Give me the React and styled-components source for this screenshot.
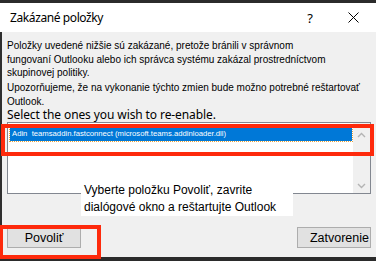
import React from "react";
import styled, { createGlobalStyle } from "styled-components";

const GlobalStyle = createGlobalStyle`
  html, body {
    margin: 0;
    padding: 0;
    background: #f0f0f0;
  }
`;

const Frame = styled.div`
  position: relative;
  width: 376px;
  height: 261px;
  box-sizing: border-box;
  border-top: 3px solid #2b2b2b;
  display: flex;
  flex-direction: column;
  overflow: hidden;
  font-family: "Liberation Sans", Arial, sans-serif;
  color: #000;
`;

const TitleBar = styled.div`
  height: 29px;
  flex-shrink: 0;
  background: #fff;
  display: flex;
  align-items: center;
  padding-left: 10px;
`;

const Title = styled.div`
  flex: 1;
  font-family: "Noto Sans", sans-serif;
  font-size: 12px;
  letter-spacing: -0.4px;
`;

const TitleButton = styled.div`
  width: ${(p) => p.$w}px;
  text-align: center;
  font-family: "Noto Sans", sans-serif;
  font-size: 13px;
  display: flex;
  justify-content: center;
  align-items: center;
`;

const Body = styled.div`
  flex: 1;
  display: flex;
  flex-direction: column;
  background: #f0f0f0;
  border-left: 2px solid #2f2f2f;
  padding: 7px 5px 0 5px;
`;

const Para = styled.p`
  margin: ${(p) => p.$mt || 0}px 0 0 0;
  font-size: 10px;
  line-height: 13.5px;
`;

const Prompt = styled.div`
  font-family: "Noto Sans", sans-serif;
  font-size: 12px;
  line-height: 14px;
  letter-spacing: -0.1px;
`;

const ListBox = styled.div`
  height: 72px;
  box-sizing: border-box;
  border: 1px solid #828790;
  background: #fff;
  display: flex;
`;

const Items = styled.div`
  flex: 1;
  padding: 4px 1px 0 2px;
`;

const Item = styled.div`
  height: 14px;
  box-sizing: border-box;
  background: ${(p) => (p.$selected ? "#0078d7" : "transparent")};
  color: ${(p) => (p.$selected ? "#fff" : "#000")};
  outline: ${(p) => (p.$selected ? "1px dotted #e8a33c" : "none")};
  font-size: 7.7px;
  line-height: 14px;
  padding-left: 2px;
  white-space: nowrap;
  overflow: hidden;
`;

const ScrollBar = styled.div`
  width: 17px;
  background: #f0f0f0;
  display: flex;
  flex-direction: column;
  justify-content: space-between;
  align-items: center;
  padding: 9px 0 4px;
`;

const ButtonRow = styled.div`
  margin-top: auto;
  display: flex;
  justify-content: space-between;
  padding: 0 0 9px 0;
`;

const Button = styled.div`
  width: 74px;
  height: 21px;
  box-sizing: border-box;
  background: #e1e1e1;
  border: 1px solid #adadad;
  display: flex;
  align-items: center;
  justify-content: ${(p) => (p.$right ? "flex-end" : "center")};
  padding-right: ${(p) => (p.$right ? "1px" : "0")};
  font-size: 12.5px;
`;

const BottomEdge = styled.div`
  height: 4px;
  flex-shrink: 0;
  background: #2b2b2b;
`;

const Highlight = styled.div`
  position: absolute;
  left: ${(p) => p.$x}px;
  top: ${(p) => p.$y}px;
  width: ${(p) => p.$w}px;
  height: ${(p) => p.$h}px;
  box-sizing: border-box;
  border: 4px solid #fe2a0c;
  pointer-events: none;
`;

const Callout = styled.div`
  position: absolute;
  left: 81px;
  top: 177px;
  width: 212px;
  height: 36px;
  box-sizing: border-box;
  background: #fff;
  padding: 2px 3px;
  font-size: 12px;
  line-height: 17px;
`;

const Chevron = ({ up }) => (
  <svg width="9" height="6" viewBox="0 0 9 6">
    <path
      d={up ? "M1 5 L4.5 1.5 L8 5" : "M1 1 L4.5 4.5 L8 1"}
      fill="none"
      stroke="#b4b4b4"
      strokeWidth="1.4"
    />
  </svg>
);

const CloseIcon = () => (
  <svg width="11" height="11" viewBox="0 0 11 11">
    <path d="M0.5 0.5 L10.5 10.5 M10.5 0.5 L0.5 10.5" stroke="#000" strokeWidth="1" />
  </svg>
);

export default function App() {
  return (
    <>
      <GlobalStyle />
      <Frame>
        <TitleBar>
          <Title>Zakázané položky</Title>
          <TitleButton $w={40}>?</TitleButton>
          <TitleButton $w={46}>
            <CloseIcon />
          </TitleButton>
        </TitleBar>
        <Body>
          <Para>
            Položky uvedené nižšie sú zakázané, pretože bránili v správnom
            <br />
            fungovaní Outlooku alebo ich správca systému zakázal prostredníctvom
            <br />
            skupinovej politiky.
          </Para>
          <Para $mt={1.5}>
            Upozorňujeme, že na vykonanie týchto zmien bude možno potrebné reštartovať
            <br />
            Outlook.
          </Para>
          <Prompt>Select the ones you wish to re-enable.</Prompt>
          <ListBox>
            <Items>
              <Item $selected>
                Adin&nbsp; teamsaddin.fastconnect (microsoft.teams.addinloader.dll)
              </Item>
            </Items>
            <ScrollBar>
              <Chevron up />
              <Chevron />
            </ScrollBar>
          </ListBox>
          <ButtonRow>
            <Button>Povoliť</Button>
            <Button $right>Zatvorenie</Button>
          </ButtonRow>
        </Body>
        <BottomEdge />
        <Highlight $x={1} $y={121} $w={373} $h={32} />
        <Highlight $x={-1} $y={222} $w={102} $h={34} />
        <Callout>
          Vyberte položku Povoliť, zavrite
          <br />
          dialógové okno a reštartujte Outlook
        </Callout>
      </Frame>
    </>
  );
}
